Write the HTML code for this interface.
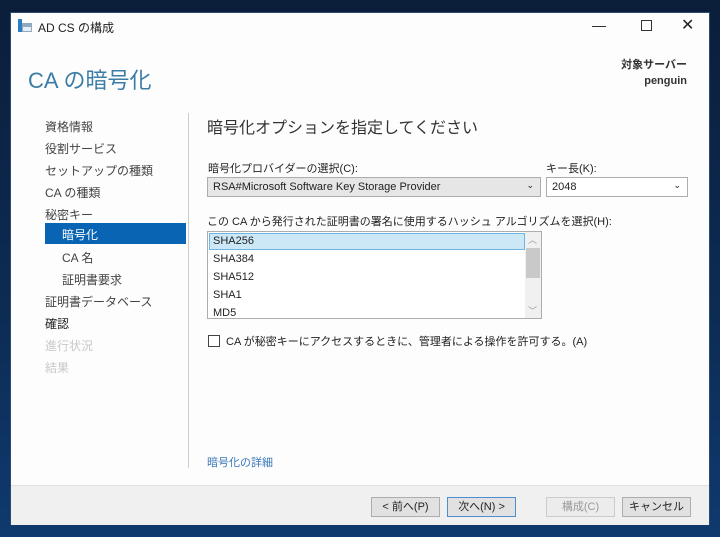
<!DOCTYPE html>
<html><head><meta charset="utf-8"><style>
*{margin:0;padding:0;box-sizing:border-box}
body{width:720px;height:537px;overflow:hidden;background:linear-gradient(180deg,#0b1e3a 0%,#0d2c55 60%,#0f3a6e 100%);font-family:"Liberation Sans","Noto Sans CJK JP",sans-serif;font-size:12px;color:#222;position:relative}
.win{position:absolute;left:10px;top:12px;width:700px;height:513px;background:#fdfdfd;border:1px solid #2a4a70}
.a{position:absolute;white-space:nowrap}
.nav{position:absolute;left:34px;font-size:12px;color:#444}
.btn{position:absolute;top:484px;height:20px;border:1px solid #adadad;background:#e1e1e1;font-size:11px;text-align:center;line-height:18px}
</style></head><body>
<div class="win">
<svg class="a" style="left:7px;top:6px" width="16" height="14"><rect x="0" y="0" width="4" height="13" fill="#2b7fc1"/><rect x="4" y="4" width="10" height="9" fill="#8fa9c2"/><rect x="5" y="8" width="8" height="4" fill="#e6edf3"/></svg>
<div class="a" style="left:27px;top:6px;font-size:12px">AD CS の構成</div>
<div class="a" style="left:581px;top:4px;font-size:14px">—</div>
<div class="a" style="left:630px;top:7px;width:11px;height:11px;border:1px solid #333"></div>
<div class="a" style="left:670px;top:2px;font-size:16px">✕</div>
<div class="a" style="left:17px;top:50px;font-size:22px;color:#3a7ca5">CA の暗号化</div>
<div class="a" style="right:22px;top:43px;font-size:11px;font-weight:bold;color:#333">対象サーバー</div>
<div class="a" style="right:22px;top:62px;font-size:11px;font-weight:bold;color:#333">penguin</div>
<div class="a" style="left:177px;top:100px;width:1px;height:355px;background:#ccc"></div>
<div class="nav" style="top:105px">資格情報</div>
<div class="nav" style="top:127px">役割サービス</div>
<div class="nav" style="top:149px">セットアップの種類</div>
<div class="nav" style="top:171px">CA の種類</div>
<div class="nav" style="top:193px">秘密キー</div>
<div class="a" style="left:34px;top:210px;width:141px;height:21px;background:#0a64b4"></div>
<div class="nav" style="left:51px;top:213px;color:#fff">暗号化</div>
<div class="nav" style="left:51px;top:236px">CA 名</div>
<div class="nav" style="left:51px;top:258px">証明書要求</div>
<div class="nav" style="top:280px">証明書データベース</div>
<div class="nav" style="top:302px;color:#222">確認</div>
<div class="nav" style="top:324px;color:#c8c8c8">進行状況</div>
<div class="nav" style="top:346px;color:#c8c8c8">結果</div>
<div class="a" style="left:196px;top:101px;font-size:16px;color:#333">暗号化オプションを指定してください</div>
<div class="a" style="left:197px;top:147px;font-size:11px">暗号化プロバイダーの選択(C):</div>
<div class="a" style="left:196px;top:164px;width:334px;height:20px;background:#e6e6e6;border:1px solid #adadad;font-size:11px;padding:3px 0 0 5px">RSA#Microsoft Software Key Storage Provider<span style="position:absolute;right:6px;top:2px;font-size:9px">⌄</span></div>
<div class="a" style="left:535px;top:147px;font-size:11px">キー長(K):</div>
<div class="a" style="left:535px;top:164px;width:142px;height:20px;background:#fff;border:1px solid #adadad;font-size:11px;padding:3px 0 0 5px">2048<span style="position:absolute;right:6px;top:2px;font-size:9px">⌄</span></div>
<div class="a" style="left:196px;top:200px;font-size:11px">この CA から発行された証明書の署名に使用するハッシュ アルゴリズムを選択(H):</div>
<div class="a" style="left:196px;top:218px;width:335px;height:88px;background:#fff;border:1px solid #adadad;overflow:hidden;font-size:11px">
<div style="position:absolute;left:1px;top:1px;width:316px;height:17px;background:#cce8f7;border:1px solid #6fb5e0"></div>
<div style="position:absolute;left:5px;top:3px">SHA256</div>
<div style="position:absolute;left:5px;top:21px">SHA384</div>
<div style="position:absolute;left:5px;top:39px">SHA512</div>
<div style="position:absolute;left:5px;top:57px">SHA1</div>
<div style="position:absolute;left:5px;top:75px">MD5</div>
<div style="position:absolute;right:0;top:0;width:16px;height:86px;background:#f0f0f0"></div>
<div style="position:absolute;right:1px;top:16px;width:14px;height:30px;background:#c9c9c9"></div>
<div style="position:absolute;right:4px;top:1px;font-size:9px;color:#999">︿</div>
<div style="position:absolute;right:4px;top:72px;font-size:9px;color:#999">﹀</div>
</div>
<div class="a" style="left:197px;top:322px;width:12px;height:12px;border:1px solid #444;background:#fff"></div>
<div class="a" style="left:215px;top:320px;font-size:11px">CA が秘密キーにアクセスするときに、管理者による操作を許可する。(A)</div>
<div class="a" style="left:196px;top:441px;font-size:11px;color:#3a78b8">暗号化の詳細</div>
<div class="a" style="left:0;top:472px;width:698px;height:40px;background:#f0f0f0;border-top:1px solid #e0e0e0"></div>
<div class="btn" style="left:360px;width:69px">&lt; 前へ(P)</div>
<div class="btn" style="left:436px;width:69px;border-color:#4a90d0">次へ(N) &gt;</div>
<div class="btn" style="left:535px;width:69px;background:#ececec;border-color:#ccc;color:#999">構成(C)</div>
<div class="btn" style="left:611px;width:69px">キャンセル</div>
</div>
</body></html>
